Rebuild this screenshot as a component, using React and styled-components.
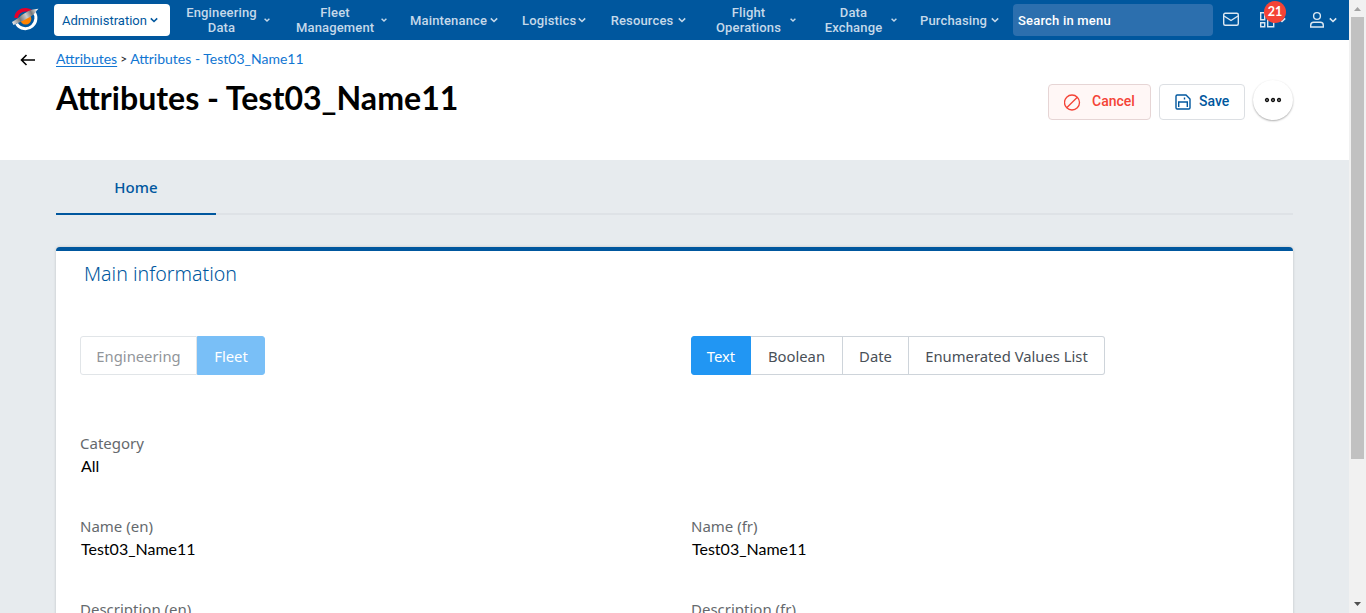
import React from 'react';
import styled, { createGlobalStyle } from 'styled-components';

const GlobalStyle = createGlobalStyle`
  *, *::before, *::after { box-sizing: border-box; }
  html, body { margin: 0; height: 613px; overflow: hidden; background: #e7ebee; }
  button, input { font: inherit; }
`;

const lato = 'Lato, Carlito, sans-serif';
const noto = '"Noto Sans", "Open Sans", sans-serif';
const roboto = 'Roboto, sans-serif';

const Window = styled.div`
  display: flex;
  width: 1366px;
  height: 613px;
  overflow: hidden;
`;

const Page = styled.div`
  display: flex;
  flex-direction: column;
  width: 1349px;
  height: 613px;
  overflow: hidden;
`;

const TopBar = styled.header`
  display: flex;
  align-items: center;
  flex: none;
  height: 40px;
  background: #00579e;
`;

const Brand = styled.div`
  display: flex;
  width: 54px;
  padding: 2px 0 6px 10px;
`;

const Menu = styled.nav`
  display: flex;
  gap: 8px;
  width: 959px;
`;

const MenuItem = styled.button`
  display: flex;
  flex: none;
  align-items: center;
  width: ${(p) => p.$width}px;
  height: 32px;
  padding: 0 0 0 8px;
  border: 0;
  border-radius: 4px;
  background: ${(p) => (p.$active ? '#fff' : 'transparent')};
  color: ${(p) => (p.$active ? '#00579e' : '#c5d9ea')};
  font: ${(p) => (p.$active ? 400 : 500)} 13px/15px ${roboto};
  letter-spacing: ${(p) => (p.$active ? 0 : 0.15)}px;
  white-space: nowrap;
`;

const MenuLabel = styled.span`
  flex: none;
  width: ${(p) => p.$width}px;
  text-align: center;
  white-space: pre-line;
`;

const Chevron = styled.svg`
  display: block;
  flex: none;
  width: ${(p) => p.$size}px;
  height: ${(p) => p.$size}px;
  margin-left: ${(p) => p.$gap}px;
  fill: none;
  stroke: currentColor;
  stroke-width: ${(p) => (p.$size < 8 ? 1.9 : 1.6)};
`;

const Search = styled.input`
  width: 200px;
  height: 32px;
  padding: 0 5px;
  border: 0;
  border-radius: 4px;
  background: #2c6fae;
  color: #fff;
  font: 500 13px ${roboto};
  letter-spacing: 0.2px;
  &::placeholder { color: #fff; opacity: 1; }
`;

const Tools = styled.div`
  display: flex;
  align-items: center;
  padding-left: 9px;
  color: #dce8f2;
`;

const ToolIcon = styled.svg`
  display: block;
  flex: none;
  fill: none;
  stroke: currentColor;
  stroke-width: 1.4;
`;

const Apps = styled.div`
  position: relative;
  display: flex;
  align-items: center;
  width: 50px;
  margin-left: 19px;
`;

const Badge = styled.span`
  position: absolute;
  left: 5px;
  top: -11px;
  width: 22px;
  height: 22px;
  border-radius: 50%;
  background: #f44336;
  color: #fff;
  font: 700 12.5px/22px ${lato};
  text-align: center;
`;

const Heading = styled.section`
  display: flex;
  flex: none;
  height: 120px;
  background: #fff;
`;

const Back = styled.div`
  width: 56px;
  padding: 13px 0 0 20px;
`;

const Titles = styled.div`
  flex: 1;
`;

const Crumbs = styled.div`
  display: flex;
  height: 20px;
  margin-top: 9px;
  color: #1176d2;
  font: 400 14px/20px ${lato};
  white-space: pre;
`;

const CrumbLink = styled.a`
  text-decoration: underline;
  text-underline-offset: 2px;
`;

const CrumbSeparator = styled.span`
  margin: 0 3px;
  color: #222;
  font-size: 12px;
`;

const Title = styled.h1`
  margin: 9px 0 0;
  color: #000;
  font: 700 32.1px/40px ${lato};
  white-space: nowrap;
`;

const Actions = styled.div`
  display: flex;
  gap: 8px;
  width: 301px;
  padding-top: 40px;
`;

const ActionButton = styled.button`
  display: flex;
  align-items: center;
  width: ${(p) => p.$width}px;
  height: 36px;
  margin-top: 4px;
  padding: 0 0 0 15px;
  border: 1px solid ${(p) => (p.$danger ? '#e6d5d5' : '#dcdfe3')};
  border-radius: 4px;
  background: ${(p) => (p.$danger ? '#fff7f6' : '#fff')};
  color: ${(p) => (p.$danger ? '#f44336' : '#00579e')};
  font: 500 14px ${roboto};
`;

const ActionLabel = styled.span`
  margin-left: ${(p) => p.$gap}px;
  padding-bottom: 2px;
`;

const MoreButton = styled.button`
  display: flex;
  align-items: center;
  justify-content: center;
  width: 40px;
  height: 40px;
  padding: 0;
  border: 0;
  border-radius: 50%;
  background: #fff;
  box-shadow: 0 1px 2px rgba(0, 0, 0, 0.32);
`;

const Content = styled.main`
  flex: 1;
  padding: 0 56px;
  background: #e7ebee;
  min-height: 0;
`;

const Tabs = styled.div`
  display: flex;
  height: 55px;
  background: linear-gradient(#dee2e6, #dee2e6) 0 53px / 100% 2px no-repeat;
`;

const Tab = styled.div`
  width: 160px;
  border-bottom: 2px solid #00579e;
  color: #00579e;
  font: 500 15px/54px ${noto};
  letter-spacing: 0.1px;
  text-align: center;
`;

const Card = styled.section`
  height: 420px;
  margin-top: 32px;
  padding: 0 24px;
  border-top: 4px solid #00579e;
  border-radius: 4px 4px 0 0;
  background: #fff;
  box-shadow: 0 0 3px rgba(0, 0, 0, 0.18);
`;

const CardTitle = styled.h2`
  height: 85px;
  margin: 0;
  padding: 8px 0 0 4px;
  color: #00579e;
  font: 300 19.6px/30px ${noto};
`;

const Columns = styled.div`
  display: grid;
  grid-template-columns: 611px 1fr;
  height: ${(p) => p.$height}px;
`;

const Segments = styled.div`
  display: flex;
  height: 39px;
  opacity: ${(p) => (p.$disabled ? 0.6 : 1)};
`;

const Segment = styled.button`
  width: ${(p) => p.$width}px;
  height: 39px;
  padding: 1px 0 0;
  border: 1px solid ${(p) => (p.$selected ? '#2196f3' : '#ced4da')};
  border-left-width: ${(p) => (p.$selected || p.$first ? 1 : 0)}px;
  background: ${(p) => (p.$selected ? '#2196f3' : '#fff')};
  color: ${(p) => (p.$selected ? '#fff' : '#495057')};
  font: 400 14.8px/36px ${noto};
  white-space: nowrap;
  &:first-child { border-radius: 3px 0 0 3px; }
  &:last-child { border-radius: 0 3px 3px 0; }
`;

const Label = styled.div`
  color: #65696d;
  font: 400 15px/22px ${noto};
`;

const Value = styled.div`
  padding: 1px 0 0 1px;
  color: #000;
  font: 400 16px/22px ${lato};
`;

const ScrollTrack = styled.div`
  display: flex;
  flex-direction: column;
  justify-content: space-between;
  align-items: center;
  width: 17px;
  height: 613px;
  background: #f1f1f1;
`;

const ScrollThumb = styled.div`
  width: 13px;
  height: 442px;
  background: #c1c1c1;
`;

const ScrollStart = styled.div`
  display: flex;
  flex-direction: column;
  align-items: center;
`;

const ScrollArrow = styled.svg`
  display: block;
  width: 17px;
  height: 17px;
  fill: ${(p) => p.color};
`;

const menu = [
  { label: 'Administration', width: 116, text: 84, size: 8, gap: 4, active: true },
  { label: 'Engineering\nData', width: 102, text: 71, size: 6, gap: 7 },
  { label: 'Fleet\nManagement', width: 106, text: 78, size: 6, gap: 7 },
  { label: 'Maintenance', width: 104, text: 76, size: 8, gap: 4 },
  { label: 'Logistics', width: 80, text: 52, size: 8, gap: 4 },
  { label: 'Resources', width: 98, text: 64, size: 8, gap: 4 },
  { label: 'Flight\nOperations', width: 100, text: 65, size: 6, gap: 9 },
  { label: 'Data\nExchange', width: 88, text: 59, size: 6, gap: 8 },
  { label: 'Purchasing', width: 93, text: 67, size: 8, gap: 4 },
];

const fields = [
  { height: 83, items: [['Category', 'All']] },
  { height: 83, items: [['Name (en)', 'Test03_Name11'], ['Name (fr)', 'Test03_Name11']] },
  { height: 60, items: [['Description (en)', ''], ['Description (fr)', '']] },
];

function Caret({ size = 8, gap = 0 }) {
  return (
    <Chevron viewBox="0 0 8 8" $size={size} $gap={gap}>
      <path d="M.8 2.4 4 5.5 7.2 2.4" />
    </Chevron>
  );
}

function Logo() {
  return (
    <svg width="30" height="30" viewBox="0 0 30 30">
      <defs>
        <linearGradient id="wing" x1="2" y1="20" x2="28" y2="7" gradientUnits="userSpaceOnUse">
          <stop offset="0" stopColor="#eee" />
          <stop offset=".3" stopColor="#777" />
          <stop offset=".55" stopColor="#ccc" />
          <stop offset=".75" stopColor="#777" />
          <stop offset="1" stopColor="#fff" />
        </linearGradient>
      </defs>
      <circle cx="15.700" cy="16" r="5.600" fill="#ff8200" />
      <path d="M6 15C6.500 9.500 11 6.600 16 6.800c2.400.1 4 .8 5.600 1.900" fill="none" stroke="#e4002b" strokeWidth="3.600" />
      <path d="M6.600 20.800c3.400 5.700 11 6.300 15.600 2.300 4.400-3.900 4.800-10.300 1.700-14" fill="none" stroke="#fff" strokeWidth="3" />
      <path d="M2 19C10 14.500 15 9 20.500 7.200 23.500 6.200 26 6 28.500 5.800 26.500 7.400 26 8.800 24 11 18.500 15.800 11 18.300 3.500 22Z" fill="url(#wing)" />
    </svg>
  );
}

export default function App() {
  return (
    <Window>
      <GlobalStyle />
      <Page>
        <TopBar>
          <Brand><Logo /></Brand>
          <Menu>
            {menu.map((m) => (
              <MenuItem key={m.label} $width={m.width} $active={m.active}>
                <MenuLabel $width={m.text}>{m.label}</MenuLabel>
                <Caret size={m.size} gap={m.gap} />
              </MenuItem>
            ))}
          </Menu>
          <Search placeholder="Search in menu" />
          <Tools>
            <ToolIcon width="18" height="16" viewBox="0 0 18 16">
              <rect x="1.7" y="1.2" width="14.600" height="12" rx="1.500" />
              <path d="m2 4 7 4.500L16 4" />
            </ToolIcon>
            <Apps>
              <ToolIcon width="16" height="16" viewBox="0 0 16 16">
                <path d="M1.700.7h4v7h-4zM9.700.7h5v3h-5zM1.700 10.700h4v4h-4zM8.700 7.700h6v7h-6z" />
              </ToolIcon>
              <Caret gap={3} />
              <Badge>21</Badge>
            </Apps>
            <ToolIcon width="16" height="18" viewBox="0 0 16 18">
              <circle cx="8" cy="5" r="3.400" />
              <path d="M1.700 16v-1.800c0-2 1.300-3 3-3h6.600c1.700 0 3 1 3 3V16z" />
            </ToolIcon>
            <Caret gap={4} />
          </Tools>
        </TopBar>
        <Heading>
          <Back>
            <svg width="16" height="14" viewBox="0 0 16 14" fill="none" stroke="#000" strokeWidth="1.600">
              <path d="M15 7H1.500M6.500 2 1.500 7l5 5" />
            </svg>
          </Back>
          <Titles>
            <Crumbs>
              <CrumbLink>Attributes</CrumbLink>
              <CrumbSeparator>&gt;</CrumbSeparator>
              <span>Attributes - Test03_Name11</span>
            </Crumbs>
            <Title>Attributes - Test03_Name11</Title>
          </Titles>
          <Actions>
            <ActionButton $width={103} $danger>
              <svg width="17" height="17" viewBox="0 0 17 17" fill="none" stroke="currentColor" strokeWidth="1.300">
                <circle cx="8" cy="8.500" r="7.500" />
                <path d="M13.300 3.200 2.700 13.800" />
              </svg>
              <ActionLabel $gap={11}>Cancel</ActionLabel>
            </ActionButton>
            <ActionButton $width={86}>
              <svg width="16" height="16" viewBox="0 0 16 16" fill="none" stroke="currentColor" strokeWidth="1.400">
                <path d="M1 2.200C1 1.400 1.400 1 2.200 1H11l4 4v8.800c0 .8-.4 1.200-1.200 1.200H2.200C1.400 15 1 14.600 1 13.800zM3.700 13V8h8.600v5M9.500 3.500v2" />
              </svg>
              <ActionLabel $gap={8}>Save</ActionLabel>
            </ActionButton>
            <MoreButton>
              <svg width="18" height="6" viewBox="0 0 18 6" fill="#999" stroke="#111" strokeWidth="1.300">
                <circle cx="3" cy="3" r="1.500" />
                <circle cx="9" cy="3" r="1.500" />
                <circle cx="15" cy="3" r="1.500" />
              </svg>
            </MoreButton>
          </Actions>
        </Heading>
        <Content>
          <Tabs><Tab>Home</Tab></Tabs>
          <Card>
            <CardTitle>Main information</CardTitle>
            <Columns $height={96}>
              <Segments $disabled>
                <Segment $width={117} $first>Engineering</Segment>
                <Segment $width={68} $selected>Fleet</Segment>
              </Segments>
              <Segments>
                <Segment $width={60} $selected>Text</Segment>
                <Segment $width={92}>Boolean</Segment>
                <Segment $width={66}>Date</Segment>
                <Segment $width={196}>Enumerated Values List</Segment>
              </Segments>
            </Columns>
            {fields.map((row) => (
              <Columns key={row.items[0][0]} $height={row.height}>
                {row.items.map(([label, value]) => (
                  <div key={label}>
                    <Label>{label}</Label>
                    <Value>{value}</Value>
                  </div>
                ))}
              </Columns>
            ))}
          </Card>
        </Content>
      </Page>
      <ScrollTrack>
        <ScrollStart>
          <ScrollArrow color="#a3a3a3" viewBox="0 0 17 17"><path d="M5 11h7L8.500 7z" /></ScrollArrow>
          <ScrollThumb />
        </ScrollStart>
        <ScrollArrow color="#505050" viewBox="0 0 17 17"><path d="M5 6h7l-3.500 4z" /></ScrollArrow>
      </ScrollTrack>
    </Window>
  );
}
